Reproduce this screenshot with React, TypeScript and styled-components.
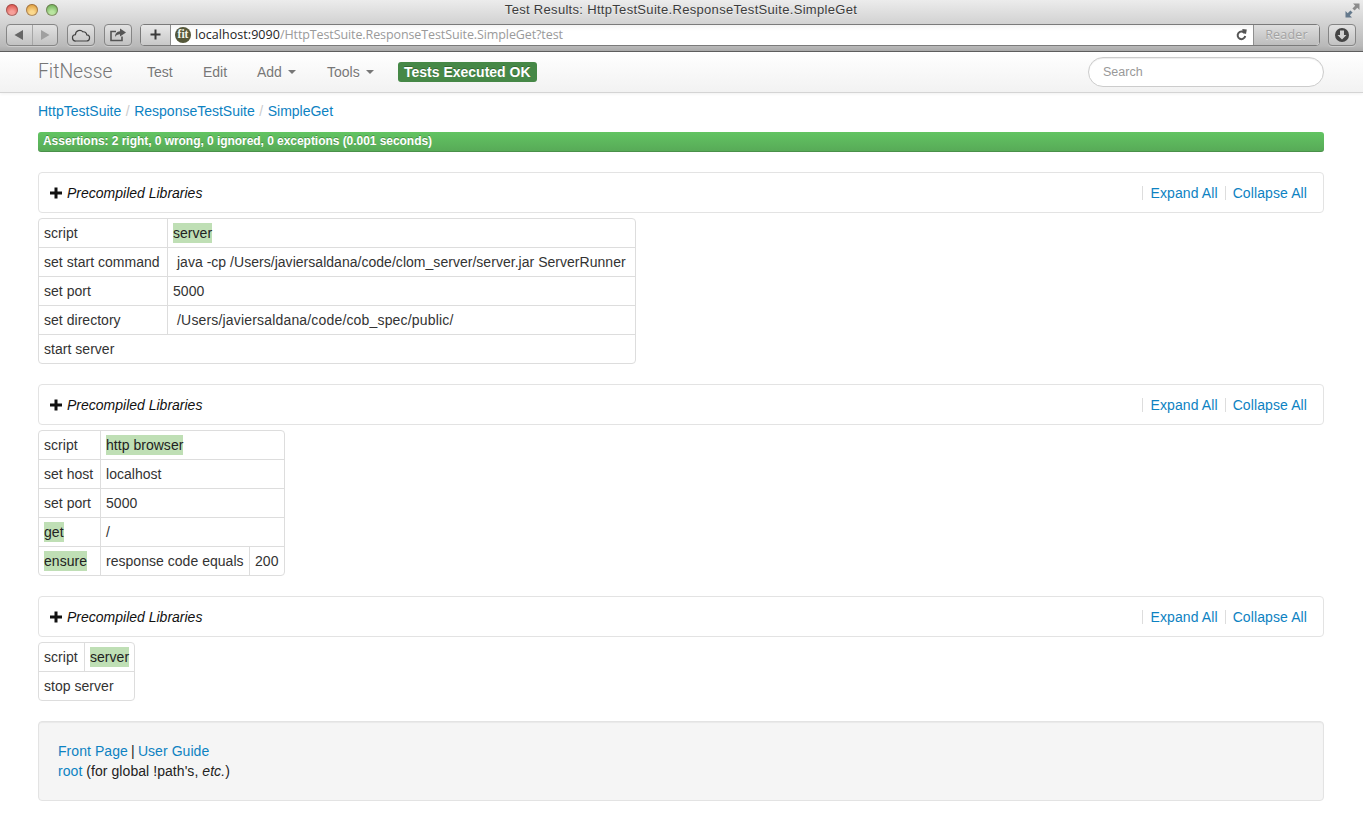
import React from "react";
import styled, { createGlobalStyle } from "styled-components";

const Global = createGlobalStyle`
  html, body { margin: 0; padding: 0; background: #fff; }
  body { font-family: "Liberation Sans", Arial, sans-serif; font-size: 14px; line-height: 20px; color: #333; }
`;

const Chrome = styled.header`
  height: 52px;
  box-sizing: border-box;
  background: linear-gradient(#ececec 0, #d6d6d6 20px, #b9b9b9 46px, #a9a9a9 100%);
  border-bottom: 1px solid #5f5f5f;
  font-family: "DejaVu Sans", sans-serif;
`;
const TitleBar = styled.div`
  height: 23px;
  display: flex;
  align-items: center;
  padding: 0 3px 3px 6px;
  box-sizing: border-box;
`;
const Lights = styled.div`
  display: flex;
  gap: 8px;
  width: 52px;
`;
const Light = styled.span<{ $c: string; $d: string }>`
  width: 12px;
  height: 12px;
  border-radius: 50%;
  background: radial-gradient(circle at 50% 75%, ${(p) => p.$c} 20%, ${(p) => p.$d} 90%);
  box-shadow: inset 0 0 0 1px rgba(90, 60, 60, 0.45);
`;
const Title = styled.div`
  flex: 1;
  text-align: center;
  font-family: "Liberation Sans", sans-serif;
  font-size: 13px;
  color: #3c3c3c;
  letter-spacing: 0.31px;
  text-shadow: 0 1px 0 rgba(255, 255, 255, 0.5);
`;
const Resize = styled.svg`
  flex: none;
  margin-left: 41px;
`;
const Tools = styled.div`
  display: flex;
  align-items: center;
  height: 23px;
  padding: 0 7px 0 6px;
`;
const Btn = styled.div<{ $w: number; $ml?: number }>`
  box-sizing: border-box;
  width: ${(p) => p.$w}px;
  height: 22px;
  margin-left: ${(p) => p.$ml ?? 0}px;
  border: 1px solid #858585;
  border-radius: 4px;
  background: linear-gradient(#e2e2e2, #c2c2c2);
  box-shadow: 0 1px 0 rgba(255, 255, 255, 0.3);
  display: flex;
  align-items: center;
  justify-content: center;
  flex: none;
`;
const Seg = styled.div`
  flex: 1;
  height: 100%;
  display: flex;
  align-items: center;
  justify-content: center;
  & + & { border-left: 1px solid #a6a6a6; }
`;
const Address = styled.div`
  flex: 1;
  height: 22px;
  margin-left: 8px;
  box-sizing: border-box;
  display: flex;
  border: 1px solid #7a7a7a;
  border-radius: 4px;
  overflow: hidden;
  background: #fff;
`;
const AddBtn = styled.div`
  width: 29px;
  flex: none;
  display: flex;
  align-items: center;
  justify-content: center;
  background: linear-gradient(#e8e8e8, #c8c8c8);
  border-right: 1px solid #8a8a8a;
`;
const UrlArea = styled.div`
  flex: 1;
  display: flex;
  align-items: center;
  padding-left: 4px;
  background: linear-gradient(#f4f4f4, #fff 6px);
  font-family: "Open Sans", sans-serif;
  font-size: 12.5px;
  color: #1e1e1e;
  min-width: 0;
`;
const Favicon = styled.span`
  width: 16px;
  height: 16px;
  border-radius: 50%;
  background: #55583a;
  color: #f4f4e8;
  font: bold 11.5px/15px "Liberation Serif", serif;
  text-align: center;
  margin-right: 4px;
  flex: none;
`;
const UrlHost = styled.span`
  letter-spacing: 0.05px;
`;
const UrlRest = styled.span`
  color: #9a9a9a;
  letter-spacing: -0.1px;
`;
const Spring = styled.div`
  flex: 1;
`;
const Reader = styled.div`
  width: 65px;
  flex: none;
  margin-left: 6px;
  background: linear-gradient(#dedede, #bdbdbd);
  border-left: 1px solid #8f8f8f;
  color: #a2a2a2;
  font-family: "Open Sans", sans-serif;
  font-size: 12.5px;
  letter-spacing: 0.2px;
  line-height: 20px;
  text-align: center;
  text-shadow: 0 1px 0 rgba(255, 255, 255, 0.6);
`;

const Navbar = styled.nav`
  height: 41px;
  box-sizing: border-box;
  background: linear-gradient(#fff, #f2f2f2);
  border-bottom: 1px solid #d4d4d4;
  box-shadow: 0 1px 3px rgba(0, 0, 0, 0.06);
  display: flex;
  align-items: center;
  padding: 0 39px 0 38px;
`;
const Brand = styled.a`
  font-family: "Roboto", sans-serif;
  font-weight: 300;
  font-size: 19.3px;
  color: #777;
  width: 90px;
  flex: none;
`;
const NavItem = styled.a<{ $w: number }>`
  width: ${(p) => p.$w}px;
  flex: none;
  color: #777;
  font-size: 14px;
  padding-left: 19px;
  box-sizing: border-box;
  display: flex;
  align-items: center;
  text-shadow: 0 1px 0 #fff;
`;
const Caret = styled.span`
  width: 0;
  height: 0;
  margin-left: 6px;
  border-left: 4px solid transparent;
  border-right: 4px solid transparent;
  border-top: 4px solid #777;
`;
const Badge = styled.span`
  margin-left: 19px;
  height: 20px;
  padding: 0 6px;
  border-radius: 3px;
  background: #468847;
  color: #fff;
  font-weight: bold;
  font-size: 14px;
  line-height: 20px;
  text-shadow: 0 -1px 0 rgba(0, 0, 0, 0.25);
`;
const Search = styled.input`
  margin-left: auto;
  width: 236px;
  height: 30px;
  box-sizing: border-box;
  border: 1px solid #ccc;
  border-radius: 15px;
  padding: 0 14px;
  font-family: "Liberation Sans", sans-serif;
  font-size: 12.5px;
  background: #fff;
  box-shadow: inset 0 1px 1px rgba(0, 0, 0, 0.075);
  outline: none;
  &::placeholder { color: #999; opacity: 1; }
`;

const Main = styled.main`
  padding: 8px 39px 0 38px;
  letter-spacing: 0.03px;
`;
const Crumbs = styled.div`
  height: 20px;
  color: #ccc;
  letter-spacing: 0;
`;
const Link = styled.a`
  color: #0d82c2;
  text-decoration: none;
`;
const Sep = styled.span`
  padding: 0 4.5px;
`;
const Progress = styled.div`
  margin-top: 11px;
  height: 20px;
  border-radius: 3px;
  background: linear-gradient(#62c462, #57a957);
  box-shadow: inset 0 -1px 0 rgba(0, 0, 0, 0.15);
  color: #fff;
  font-weight: bold;
  font-size: 12px;
  line-height: 18px;
  padding-left: 5px;
  letter-spacing: -0.045px;
  text-shadow: 0 -1px 0 rgba(0, 0, 0, 0.25);
`;
const Collapsible = styled.section`
  margin-top: 20px;
  height: 41px;
  box-sizing: border-box;
  border: 1px solid #e3e3e3;
  border-radius: 4px;
  display: flex;
  align-items: center;
  padding: 0 16px 0 11px;
`;
const Plus = styled.svg`
  width: 12px;
  height: 12px;
  flex: none;
  margin-right: 5px;
`;
const CollTitle = styled.span`
  font-style: italic;
  color: #111;
  flex: 1;
  letter-spacing: 0;
`;
const CollLink = styled(Link)`
  display: block;
  height: 14px;
  line-height: 14px;
  border-left: 1px solid #ddd;
  padding-left: 7px;
  margin-left: 7px;
  letter-spacing: 0.1px;
`;

const Table = styled.table`
  margin-top: 5px;
  border-collapse: separate;
  border-spacing: 0;
  border: 1px solid #ddd;
  border-radius: 4px;
`;
const Td = styled.td<{ $w?: number }>`
  box-sizing: border-box;
  width: ${(p) => (p.$w ? `${p.$w}px` : "auto")};
  padding: 4px 5px;
  height: 29px;
  line-height: 20px;
  border-left: 1px solid #ddd;
  border-top: 1px solid #ddd;
  white-space: pre;
  color: #333;
  tr:first-child > & { border-top: 0; height: 28px; }
  &:first-child { border-left: 0; }
`;
const Pass = styled.span`
  background: #bfdfb5;
  color: #222;
  display: inline-block;
  line-height: 20px;
`;
const PathText = styled.span`
  letter-spacing: 0.17px;
`;
const Footer = styled.footer`
  margin-top: 20px;
  height: 80px;
  box-sizing: border-box;
  padding: 19px;
  background: #f5f5f5;
  border: 1px solid #e3e3e3;
  border-radius: 4px;
  box-shadow: inset 0 1px 1px rgba(0, 0, 0, 0.05);
  color: #222;
  letter-spacing: 0.06px;
`;
const Bar = styled.span`
  margin: 0 -0.8px;
`;

const Section = () => (
  <Collapsible>
    <Plus viewBox="0 0 12 12"><path d="M4.5 0.5h3v4h4.5v3H7.5v4h-3v-4H0v-3h4.5z" fill="#111" /></Plus>
    <CollTitle>Precompiled Libraries</CollTitle>
    <CollLink>Expand All</CollLink>
    <CollLink>Collapse All</CollLink>
  </Collapsible>
);

export default function App() {
  return (
    <>
      <Global />
      <Chrome>
        <TitleBar>
          <Lights>
            <Light $c="#f7a09a" $d="#d6423b" />
            <Light $c="#fbd98e" $d="#d9922c" />
            <Light $c="#b9e5a0" $d="#5fa548" />
          </Lights>
          <Title>Test Results: HttpTestSuite.ResponseTestSuite.SimpleGet</Title>
          <Resize width="15" height="15" viewBox="0 0 15 15">
            <path d="M8 0.5h6.5V7l-2.2-2.2L9.6 7.6 7.4 5.4l2.8-2.7z" fill="#8c8c8c" />
            <path d="M7 14.5H0.5V8l2.2 2.2 2.7-2.8 2.2 2.2-2.8 2.7z" fill="#64798c" />
          </Resize>
        </TitleBar>
        <Tools>
          <Btn $w={52}>
            <Seg><svg width="10" height="10" viewBox="0 0 10 10"><path d="M9 0v10L0.5 5z" fill="#666" /></svg></Seg>
            <Seg><svg width="10" height="10" viewBox="0 0 10 10"><path d="M1 0v10L9.5 5z" fill="#a0a0a0" /></svg></Seg>
          </Btn>
          <Btn $w={28} $ml={9}>
            <svg width="20" height="14" viewBox="0 0 20 14"><path d="M5 13a3.2 3.2 0 0 1-.6-6.4A4.4 4.4 0 0 1 12 3.8a3.2 3.2 0 0 1 3.7 3A3.1 3.1 0 0 1 15.2 13z" fill="none" stroke="#444" strokeWidth="1.2" /></svg>
          </Btn>
          <Btn $w={28} $ml={9}>
            <svg width="18" height="14" viewBox="0 0 18 14"><path d="M13 8.5v4H2V3.5h5" fill="none" stroke="#555" strokeWidth="1.6" /><path d="M11 0.5l6 4-6 4V6.2C8.6 6.2 7 7.2 6 9c0-3.4 2-5.6 5-5.8z" fill="#555" /></svg>
          </Btn>
          <Address>
            <AddBtn>
              <svg width="11" height="11" viewBox="0 0 11 11"><path d="M4.5 0.5h2v4h4v2h-4v4h-2v-4h-4v-2h4z" fill="#3a3a3a" /></svg>
            </AddBtn>
            <UrlArea>
              <Favicon>fit</Favicon>
              <UrlHost>localhost:9090</UrlHost>
              <UrlRest>/HttpTestSuite.ResponseTestSuite.SimpleGet?test</UrlRest>
              <Spring />
              <svg width="11" height="13" viewBox="0 0 11 13"><path d="M8.6 5.2A3.8 3.8 0 1 0 9.2 8" fill="none" stroke="#555" strokeWidth="2" /><path d="M6.4 1L10.8 1.6 10 6 6.4 4.6z" fill="#555" /></svg>
              <Reader>Reader</Reader>
            </UrlArea>
          </Address>
          <Btn $w={28} $ml={8}>
            <svg width="16" height="16" viewBox="0 0 16 16"><circle cx="8" cy="8" r="7" fill="#444" /><path d="M6 3.5h4V8h2.5L8 12.5 3.5 8H6z" fill="#cfcfcf" /></svg>
          </Btn>
        </Tools>
      </Chrome>
      <Navbar>
        <Brand>FitNesse</Brand>
        <NavItem $w={56}>Test</NavItem>
        <NavItem $w={54}>Edit</NavItem>
        <NavItem $w={70}>Add<Caret /></NavItem>
        <NavItem $w={71}>Tools<Caret /></NavItem>
        <Badge>Tests Executed OK</Badge>
        <Search placeholder="Search" />
      </Navbar>
      <Main>
        <Crumbs>
          <Link>HttpTestSuite</Link><Sep>/</Sep>
          <Link>ResponseTestSuite</Link><Sep>/</Sep>
          <Link>SimpleGet</Link>
        </Crumbs>
        <Progress>Assertions: 2 right, 0 wrong, 0 ignored, 0 exceptions (0.001 seconds)</Progress>

        <Section />
        <Table>
          <tbody>
            <tr><Td $w={128}>script</Td><Td $w={468}><Pass>server</Pass></Td></tr>
            <tr><Td>set start command</Td><Td>{"\u00a0java -cp /Users/javiersaldana/code/clom_server/server.jar ServerRunner\u00a0"}</Td></tr>
            <tr><Td>set port</Td><Td>5000</Td></tr>
            <tr><Td>set directory</Td><Td><PathText>{"\u00a0/Users/javiersaldana/code/cob_spec/public/\u00a0"}</PathText></Td></tr>
            <tr><Td colSpan={2}>start server</Td></tr>
          </tbody>
        </Table>

        <Section />
        <Table>
          <tbody>
            <tr><Td>script</Td><Td colSpan={2}><Pass>http browser</Pass></Td></tr>
            <tr><Td>set host</Td><Td colSpan={2}>localhost</Td></tr>
            <tr><Td>set port</Td><Td colSpan={2}>5000</Td></tr>
            <tr><Td><Pass>get</Pass></Td><Td colSpan={2}>/</Td></tr>
            <tr><Td $w={61}><Pass>ensure</Pass></Td><Td $w={149}>response code equals</Td><Td $w={35}>200</Td></tr>
          </tbody>
        </Table>

        <Section />
        <Table>
          <tbody>
            <tr><Td $w={45}>script</Td><Td $w={50}><Pass>server</Pass></Td></tr>
            <tr><Td colSpan={2}>stop server</Td></tr>
          </tbody>
        </Table>

        <Footer>
          <Link>Front Page</Link> <Bar>|</Bar> <Link>User Guide</Link>
          <br />
          <Link>root</Link> (for global !path's, <em>etc.</em>)
        </Footer>
      </Main>
    </>
  );
}
